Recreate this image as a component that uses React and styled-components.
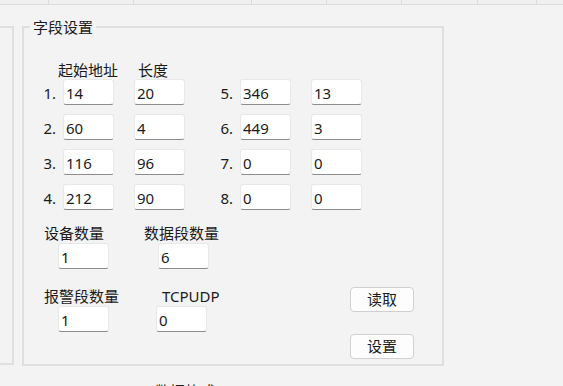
import React from "react";
import styled, { createGlobalStyle } from "styled-components";

const Global = createGlobalStyle`
  html, body { margin: 0; padding: 0; background: #f3f3f3; overflow: hidden; }
  body {
    width: 563px; height: 386px;
    font-family: "Noto Sans", "Noto Sans CJK SC", sans-serif;
    font-size: 15px; color: #1b1b1b;
  }
`;

const Page = styled.div`
  width: 563px; height: 386px; overflow: hidden; background: #f3f3f3;
`;

const TabStrip = styled.div`
  display: flex; height: 4px; border-bottom: 1px solid #dcdcdc;
`;
const Tab = styled.div`
  width: ${p => p.$w}px; flex: none; height: 100%;
  border-left: ${p => (p.$first ? "none" : "1px solid #dcdcdc")};
  box-sizing: border-box; background: #f0f0f0;
`;

const Main = styled.div`
  display: flex; align-items: flex-start; gap: 8px; margin-top: 12px;
`;

const SidePanel = styled.div`
  margin-left: -10px; margin-top: 9px; width: 24px; height: 339px;
  box-sizing: border-box; border: 2px solid #dfdfdf; flex: none;
`;

const Group = styled.fieldset`
  margin: 0; width: 422px; box-sizing: border-box; flex: none;
  border: 2px solid #dfdfdf; padding: 24px 0 5px 14px; min-inline-size: 0;
`;
const Legend = styled.legend`
  padding: 0 3px; margin-left: -8px; line-height: 20px; font-size: 15px;
  color: #1b1b1b;
`;

const HeaderRow = styled.div`
  display: flex; padding-left: 20px; line-height: 18px; height: 18px;
`;
const HeaderCell = styled.span`
  width: ${p => (p.$w ? `${p.$w}px` : "auto")}; white-space: nowrap;
`;

const Rows = styled.div`
  display: flex; flex-direction: column; gap: 9px;
`;
const Row = styled.div`
  display: flex; align-items: center; height: 26px;
`;
const Num = styled.span`
  width: ${p => p.$w}px; box-sizing: border-box; text-align: right;
  padding-right: 7px; flex: none; line-height: 24px; padding-top: 2px;
`;
const Pair = styled.div`
  display: flex; gap: 20px;
`;
const Box = styled.input`
  width: 51px; height: 26px; box-sizing: border-box; flex: none;
  margin: 0; margin-left: ${p => p.$indent || 0}px;
  padding: 1px 2px 0; background: #fff;
  border: 1px solid #e8e8e8; border-bottom-color: #8c8c8c; border-radius: 3px;
  font-family: "Noto Sans", "Noto Sans CJK SC", sans-serif;
  font-size: 15px; color: #1b1b1b; outline: none;
`;

const Lower = styled.div`
  display: flex; align-items: flex-start; margin-top: 14px; padding-left: 6px;
`;
const FieldGrid = styled.div`
  display: grid; grid-template-columns: 100px 80px; row-gap: 18px;
  align-content: start;
`;
const Field = styled.div`
  display: flex; flex-direction: column; gap: 1px;
`;
const FieldLabel = styled.span`
  line-height: 18px; height: 18px; white-space: nowrap;
  padding-left: ${p => p.$indent || 0}px;
`;

const ButtonCol = styled.div`
  display: flex; flex-direction: column; gap: 22px;
  margin-left: auto; margin-right: 28px; padding-top: 63px;
`;
const Button = styled.button`
  width: 64px; height: 25px; box-sizing: border-box; padding: 0;
  background: #fdfdfd; border: 1px solid #d0d0d0; border-radius: 4px;
  font-family: "Noto Sans", "Noto Sans CJK SC", sans-serif;
  font-size: 15px; color: #1b1b1b; line-height: 23px;
`;

const Footer = styled.div`
  padding-left: 155px; margin-top: 15px; line-height: 20px; white-space: nowrap;
`;

const tabs = [48, 85, 118, 75, 75, 76, 59, 27];
const left = [["1.", 14, 20], ["2.", 60, 4], ["3.", 116, 96], ["4.", 212, 90]];
const right = [["5.", 346, 13], ["6.", 449, 3], ["7.", 0, 0], ["8.", 0, 0]];

export default function App() {
  return (
    <Page>
      <Global />
      <TabStrip>
        {tabs.map((w, i) => <Tab key={i} $w={w} $first={i === 0} />)}
      </TabStrip>
      <Main>
        <SidePanel />
        <Group>
          <Legend>字段设置</Legend>
          <HeaderRow>
            <HeaderCell $w={80}>起始地址</HeaderCell>
            <HeaderCell>长度</HeaderCell>
          </HeaderRow>
          <Rows>
            {left.map((l, i) => {
              const r = right[i];
              return (
                <Row key={i}>
                  <Num $w={25}>{l[0]}</Num>
                  <Pair>
                    <Box readOnly value={l[1]} />
                    <Box readOnly value={l[2]} />
                  </Pair>
                  <Num $w={55}>{r[0]}</Num>
                  <Pair>
                    <Box readOnly value={r[1]} />
                    <Box readOnly value={r[2]} />
                  </Pair>
                </Row>
              );
            })}
          </Rows>
          <Lower>
            <FieldGrid>
              <Field>
                <FieldLabel>设备数量</FieldLabel>
                <Box readOnly value="1" $indent={14} />
              </Field>
              <Field>
                <FieldLabel>数据段数量</FieldLabel>
                <Box readOnly value="6" $indent={14} />
              </Field>
              <Field>
                <FieldLabel>报警段数量</FieldLabel>
                <Box readOnly value="1" $indent={14} />
              </Field>
              <Field>
                <FieldLabel $indent={18}>TCPUDP</FieldLabel>
                <Box readOnly value="0" $indent={12} />
              </Field>
            </FieldGrid>
            <ButtonCol>
              <Button>读取</Button>
              <Button>设置</Button>
            </ButtonCol>
          </Lower>
        </Group>
      </Main>
      <Footer>数据格式</Footer>
    </Page>
  );
}
